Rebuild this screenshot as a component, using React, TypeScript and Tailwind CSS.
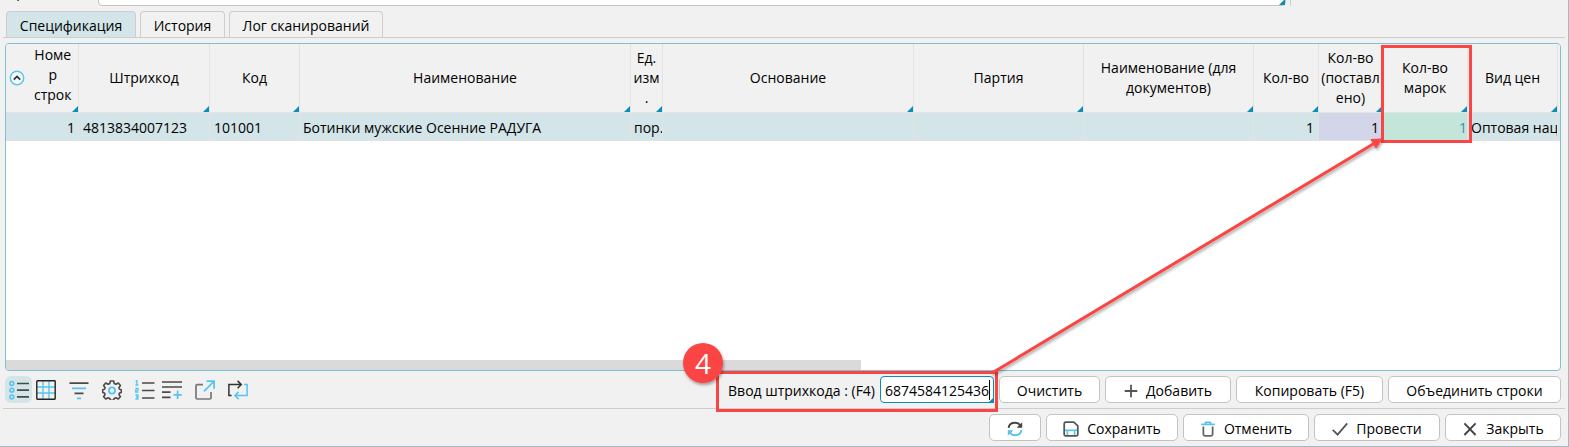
import React from "react";

type Column = {
  lines: string[];
  width?: string;
  value: string;
  cell?: string;
  pad?: string;
  align?: "left" | "right";
};

const columns: Column[] = [
  { lines: ["Номе", "р", "строк"], width: "w-[73px]", value: "1", align: "right", pad: "px-[3px]" },
  { lines: ["Штрихкод"], width: "w-[131px]", value: "4813834007123" },
  { lines: ["Код"], width: "w-[90px]", value: "101001" },
  { lines: ["Наименование"], value: "Ботинки мужские Осенние РАДУГА", pad: "px-[3px]" },
  { lines: ["Ед.", "изм", "."], width: "w-[32px]", value: "пор.", pad: "pl-[3px] pr-0" },
  { lines: ["Основание"], width: "w-[251px]", value: "" },
  { lines: ["Партия"], width: "w-[170px]", value: "" },
  { lines: ["Наименование (для", "документов)"], width: "w-[170px]", value: "" },
  { lines: ["Кол-во"], width: "w-[65px]", value: "1", align: "right" },
  { lines: ["Кол-во", "(поставл", "ено)"], width: "w-[64px]", value: "1", align: "right", cell: "bg-[#d3d5e9]", pad: "px-[3px]" },
  { lines: ["Кол-во", "марок"], width: "w-[85px]", value: "1", align: "right", cell: "bg-[#c4e6da] text-[#3a8fb0]", pad: "px-0" },
  { lines: ["Вид цен"], width: "w-[90px]", value: "Оптовая наценка", pad: "pl-[3px] pr-0" },
];

const dark = "#4a4a4a";
const blue = "#54c3ee";

function Corner() {
  return (
    <svg className="absolute right-0 bottom-0 size-1.5" viewBox="0 0 6 6" aria-hidden="true">
      <path d="M6 0V6H0Z" fill="#0a8dbb" />
    </svg>
  );
}

function Icon({ children, size = "size-5" }: { children: React.ReactNode; size?: string }) {
  return (
    <svg className={`${size} shrink-0`} viewBox="0 0 20 20" fill="none" stroke={dark} strokeWidth="1.7" aria-hidden="true">
      {children}
    </svg>
  );
}

function ToolButton({ label, active, children }: { label: string; active?: boolean; children: React.ReactNode }) {
  return (
    <button
      type="button"
      aria-label={label}
      className={`flex h-[27px] w-[27px] items-center justify-center rounded-md ${active ? "bg-[#d3e5e8]" : ""}`}
    >
      <Icon>{children}</Icon>
    </button>
  );
}

function ActionButton({ width, label, children }: { width: string; label?: string; children: React.ReactNode }) {
  return (
    <button
      type="button"
      aria-label={label}
      className={`flex h-[27px] items-center justify-center gap-2 rounded-[5px] border border-[#c3c3c3] bg-white pt-0.5 whitespace-nowrap ${width}`}
    >
      {children}
    </button>
  );
}

function Tabs() {
  const base = "h-[26px] rounded-t-[4px] border border-b-0 border-[#cdcdcd] pt-0.5 text-center";
  return (
    <div role="tablist" className="mx-[3px] mt-[5px] flex gap-1 border-b border-[#cdcdcd] pl-[3px]">
      <button type="button" role="tab" aria-selected="true" className={`${base} w-[130px] bg-[#d3e5e8]`}>
        Спецификация
      </button>
      <button type="button" role="tab" aria-selected="false" className={`${base} w-[85px]`}>
        История
      </button>
      <button type="button" role="tab" aria-selected="false" className={`${base} w-[154px]`}>
        Лог сканирований
      </button>
    </div>
  );
}

function Grid() {
  return (
    <div className="mt-[5px] mr-[7px] ml-[5px] flex flex-1 flex-col overflow-hidden rounded-[4px] border border-[#7fbfd3] bg-white">
      <table className="w-full table-fixed border-separate border-spacing-0">
        <thead>
          <tr className="h-[69px] bg-[#f1f1f1]">
            {columns.map((c, i) => (
              <th
                key={i}
                scope="col"
                className={`relative border-r border-b border-[#e3e3e3] p-0 text-center align-middle leading-5 font-normal whitespace-nowrap ${c.width ?? ""}`}
              >
                <div className={i === 0 ? "flex items-center gap-[9px] pl-[3px]" : ""}>
                  {i === 0 && (
                    <svg className="size-4 shrink-0" viewBox="0 0 16 16" fill="none" aria-hidden="true">
                      <circle cx="8" cy="8" r="6.7" fill="#f4fbfe" stroke="#62c4ea" strokeWidth="1.5" />
                      <path d="M4.8 9.6 8 6.4l3.2 3.2" stroke="#333" strokeWidth="1.8" />
                    </svg>
                  )}
                  <div className={i === 0 ? "pb-1.5" : ""}>
                    {c.lines.map((line) => (
                      <div key={line}>{line}</div>
                    ))}
                  </div>
                </div>
                <Corner />
              </th>
            ))}
            <td className="w-0.5 border-b border-[#e3e3e3] p-0" />
          </tr>
        </thead>
        <tbody>
          <tr className="h-7 bg-[#d3e5e8]">
            {columns.map((c, i) => (
              <td
                key={i}
                className={`overflow-hidden border-r border-b border-[#e3e3e3] pt-0.5 pb-0 whitespace-nowrap ${
                  c.align === "right" ? "text-right" : "text-left"
                } ${c.pad ?? "px-1"} ${c.cell ?? ""}`}
              >
                {c.value}
              </td>
            ))}
            <td className="border-b border-[#e3e3e3] p-0" />
          </tr>
        </tbody>
      </table>
      <div className="mt-auto h-2.5 w-[55%] bg-[#dadada]" />
    </div>
  );
}

function Toolbar() {
  return (
    <div className="flex items-center justify-between py-[5px] pr-[7px] pl-[5px]">
      <div className="flex gap-1.5">
        <div className="flex">
          <ToolButton label="Список" active>
            <path d="M8 3.5h12M8 10.2h12M8 16.9h12" />
            <g stroke={blue} strokeWidth="1.5">
              <circle cx="2.8" cy="3.5" r="1.9" />
              <circle cx="2.8" cy="10.2" r="1.9" />
              <circle cx="2.8" cy="16.9" r="1.9" />
            </g>
          </ToolButton>
          <ToolButton label="Таблица">
            <path d="M7 1v18M13 1v18M1 7h18M1 13h18" stroke={blue} strokeWidth="1.3" />
            <rect x="0.8" y="0.8" width="18.4" height="18.4" rx="0.6" stroke="#222" strokeWidth="1.4" />
          </ToolButton>
        </div>
        <ToolButton label="Фильтр">
          <path d="M0.5 3.2h19M5.5 13.3h9" />
          <path d="M3 8.3h14M8 18.3h4" stroke={blue} />
        </ToolButton>
        <ToolButton label="Настройки">
          <path
            d="M8.3 1h3.4l.5 2.5 1.7.8 2.4-1.3 2.1 2.5-1.5 2.2.7 1.6 1.7.5v2.6l-1.700.5-.7 1.600 1.500 2.200-2.100 2.300-2.400-1.300-1.700.7-.5 1.800H8.300l-.5-1.800-1.700-.7-2.400 1.300-2.100-2.300 1.500-2.200-.7-1.600-1.700-.5V9.800l1.700-.5.7-1.600L1.600 5.500 3.700 3l2.400 1.300 1.700-.8Z"
            strokeWidth="1.6"
            strokeLinejoin="round"
          />
          <circle cx="10" cy="10.500" r="3.100" stroke={blue} strokeWidth="1.8" />
        </ToolButton>
        <div className="flex">
          <ToolButton label="Нумерация">
            <path d="M7 3h12.5M7 10.5h12.5M7 18h12.5" />
            <g stroke={blue} strokeWidth="1.300">
              <path d="M.6 1.5 1.9.7V5M.4 5h3M.4 8.3h2.5v1.8H.7v1.9h2.6M.4 15h2.5v4H.4M1 17h1.9" />
            </g>
          </ToolButton>
          <ToolButton label="Добавить строки">
            <path d="M0 2h20M0 7h20M0 12.2h8.5M0 17.3h8.5" />
            <path d="M15.6 10.7v8.2M11.5 14.8h8.2" stroke={blue} />
          </ToolButton>
        </div>
        <ToolButton label="Открыть">
          <path d="M8 4.6H2.2q-1.2 0-1.2 1.2v12q0 1.2 1.2 1.2h12.6q1.2 0 1.2-1.2V12" stroke="#777" />
          <path d="M9 11.3 18.7 1.5M11.5 1.2h7.6v7.6" stroke={blue} />
        </ToolButton>
        <ToolButton label="Обновить">
          <path d="M3.6 15.6H.9V4.6h12.2M9.6.9l3.7 3.7-3.7 3.7" stroke="#333" strokeWidth="1.5" />
          <path d="M16.2 4.6h2.9v11H7.2M10.6 11.9l-3.7 3.7 3.7 3.7" stroke={blue} strokeWidth="1.5" />
        </ToolButton>
      </div>

      <div className="flex items-center gap-[5px]">
        <label htmlFor="barcode" className="pt-0.5">
          Ввод штрихкода : (F4)
        </label>
        <div className="relative">
          <input
            id="barcode"
            type="text"
            defaultValue="6874584125436"
            className="block h-[27px] w-[114px] rounded-[4px] border border-[#0a8dbb] bg-white px-1 pt-0.5 outline-none"
          />
          <Corner />
          <span className="absolute top-1 right-1 h-5 w-px bg-black" />
        </div>
        <ActionButton width="w-[101px]">Очистить</ActionButton>
        <ActionButton width="w-[126px]">
          <Icon size="size-3.5">
            <path d="M10 1v18M1 10h18" stroke="#555" strokeWidth="2.6" />
          </Icon>
          Добавить
        </ActionButton>
        <ActionButton width="w-[147px]">Копировать (F5)</ActionButton>
        <ActionButton width="w-[173px]">Объединить строки</ActionButton>
      </div>
    </div>
  );
}

function Footer() {
  return (
    <div className="mx-[3px] flex justify-end gap-[5px] border-t border-[#cdcdcd] py-[5px] pr-1">
      <ActionButton width="w-[52px]" label="Обновить">
        <Icon size="size-4">
          <g strokeWidth="2.4">
            <path d="M2 8.5C2.6 4.600 6 2.200 10 2.200c3 0 5.500 1.500 7 4" stroke="#444" />
            <path d="M19 1.500V8.500h-7Z" fill="#444" stroke="none" />
            <path d="M18 11.500c-.6 3.900-4 6.300-8 6.300-3 0-5.500-1.500-7-4" stroke={blue} />
            <path d="M1 18.500V11.500h7Z" fill={blue} stroke="none" />
          </g>
        </Icon>
      </ActionButton>
      <ActionButton width="w-[132px]">
        <Icon size="size-4">
          <path
            d="M3.500 1.500H13.500L18.500 6V17Q18.500 18.500 17 18.500H3Q1.500 18.500 1.500 17V3.500Q1.500 1.500 3.500 1.500Z"
            stroke="#555"
            strokeWidth="2.200"
          />
          <path d="M2.500 11.500H17.500M5.500 17.500V11.500M14.500 11.500V17.500" stroke={blue} strokeWidth="2" />
        </Icon>
        Сохранить
      </ActionButton>
      <ActionButton width="w-[126px]">
        <Icon size="size-4">
          <path d="M1.500 4.200H18.500M7 4V1.500H13V4" stroke={blue} strokeWidth="2" />
          <path d="M4.200 7V16.500Q4.200 18.500 6.200 18.500H13.800Q15.800 18.500 15.800 16.500V7" stroke="#666" strokeWidth="2.200" />
        </Icon>
        Отменить
      </ActionButton>
      <ActionButton width="w-[126px]">
        <Icon size="size-4">
          <path d="M1 11 7 17 19 3" stroke="#555" strokeWidth="2.200" />
        </Icon>
        Провести
      </ActionButton>
      <ActionButton width="w-[116px]">
        <Icon size="size-4">
          <path d="M3 3 17 17.500M17 3 3 17.500" stroke="#444" strokeWidth="2.400" />
        </Icon>
        Закрыть
      </ActionButton>
    </div>
  );
}

/* Step marker with an arrow from the barcode field to the quantity column. */
function Callout() {
  return (
    <div className="pointer-events-none absolute -right-px -bottom-px h-[447px] w-[889px]">
      <svg className="size-full" viewBox="680 0 889 447" fill="none" aria-hidden="true">
        <defs>
          <filter id="shade" x="-5%" y="-5%" width="110%" height="110%">
            <feDropShadow dx="1" dy="2" stdDeviation="1.5" floodColor="#000" floodOpacity="0.35" />
          </filter>
        </defs>
        <rect x="1382.500" y="46.500" width="88" height="95" stroke="#fb4444" strokeWidth="3" />
        <rect x="717.500" y="372.500" width="279" height="38" stroke="#fb4444" strokeWidth="3" />
        <g filter="url(#shade)">
          <path d="M992 373 1374 143.500" stroke="#fb4444" strokeWidth="3" />
          <path d="M1382 139 1376 148 1371 139.500Z" fill="#fb4444" stroke="#fb4444" />
          <circle cx="703" cy="363" r="20" fill="#fb4444" />
        </g>
      </svg>
      <span className="absolute top-[343px] left-[3px] flex size-10 items-center justify-center text-[28px] font-medium text-white">4</span>
    </div>
  );
}

export default function App() {
  return (
    <div className="relative flex min-h-screen flex-col border-r border-b border-[#a9b8bd] bg-[#f1f1f1] font-['Open_Sans','Noto_Sans',sans-serif] text-[14px] leading-5 text-black">
      <div className="flex h-1.5 items-end overflow-hidden pl-[6px]">
        <span className="w-[92px] shrink-0 pb-1">Примечание</span>
        <div className="relative h-6 w-[1188px] rounded-[4px] border border-[#c3c3c3] bg-white">
          <Corner />
        </div>
        <div className="ml-1 h-full border-r border-[#cdcdcd]" />
      </div>
      <Tabs />
      <Grid />
      <Toolbar />
      <Footer />
      <Callout />
    </div>
  );
}
